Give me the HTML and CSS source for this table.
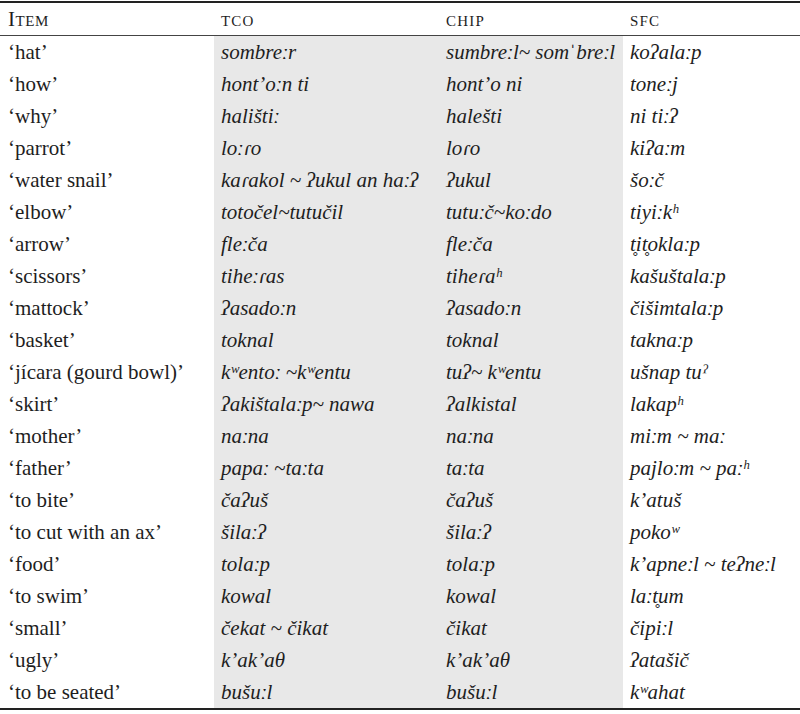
FILE: index.html
```html
<!DOCTYPE html>
<html lang="en">
<head>
<meta charset="utf-8">
<title>Lexical comparison</title>
<link rel="stylesheet" href="styles.css">
</head>
<body>
<table class="lex">
  <colgroup>
    <col class="c-item"><col class="c-tco"><col class="c-chip"><col class="c-sfc">
  </colgroup>
  <thead>
    <tr><th>Item</th><th>tco</th><th>chip</th><th>sfc</th></tr>
  </thead>
  <tbody>
    <tr><td>‘hat’</td><td class="g">sombreːr</td><td class="g">sumbreːl~ somˈbreːl</td><td>koʔalaːp</td></tr>
    <tr><td>‘how’</td><td class="g">hont’oːn ti</td><td class="g">hont’o ni</td><td>toneːj</td></tr>
    <tr><td>‘why’</td><td class="g">halištiː</td><td class="g">halešti</td><td>ni tiːʔ</td></tr>
    <tr><td>‘parrot’</td><td class="g">loːɾo</td><td class="g">loɾo</td><td>kiʔaːm</td></tr>
    <tr><td>‘water snail’</td><td class="g">kaɾakol ~ ʔukul an haːʔ</td><td class="g">ʔukul</td><td>šoːč</td></tr>
    <tr><td>‘elbow’</td><td class="g">totočel~tutučil</td><td class="g">tutuːč~koːdo</td><td>tiyiːkʰ</td></tr>
    <tr><td>‘arrow’</td><td class="g">fleːča</td><td class="g">fleːča</td><td>t̥it̥oklaːp</td></tr>
    <tr><td>‘scissors’</td><td class="g">tiheːɾas</td><td class="g">tiheɾaʰ</td><td>kašuštalaːp</td></tr>
    <tr><td>‘mattock’</td><td class="g">ʔasadoːn</td><td class="g">ʔasadoːn</td><td>čišimtalaːp</td></tr>
    <tr><td>‘basket’</td><td class="g">toknal</td><td class="g">toknal</td><td>taknaːp</td></tr>
    <tr><td>‘jícara (gourd bowl)’</td><td class="g">kʷentoː ~kʷentu</td><td class="g">tuʔ~ kʷentu</td><td>ušnap tuˀ</td></tr>
    <tr><td>‘skirt’</td><td class="g">ʔakištalaːp~ nawa</td><td class="g">ʔalkistal</td><td>lakapʰ</td></tr>
    <tr><td>‘mother’</td><td class="g">naːna</td><td class="g">naːna</td><td>miːm ~ maː</td></tr>
    <tr><td>‘father’</td><td class="g">papaː ~taːta</td><td class="g">taːta</td><td>pajloːm ~ paːʰ</td></tr>
    <tr><td>‘to bite’</td><td class="g">čaʔuš</td><td class="g">čaʔuš</td><td>k’atuš</td></tr>
    <tr><td>‘to cut with an ax’</td><td class="g">šilaːʔ</td><td class="g">šilaːʔ</td><td>pokoʷ</td></tr>
    <tr><td>‘food’</td><td class="g">tolaːp</td><td class="g">tolaːp</td><td>k’apneːl ~ teʔneːl</td></tr>
    <tr><td>‘to swim’</td><td class="g">kowal</td><td class="g">kowal</td><td>laːt̥um</td></tr>
    <tr><td>‘small’</td><td class="g">čekat ~ čikat</td><td class="g">čikat</td><td>čipiːl</td></tr>
    <tr><td>‘ugly’</td><td class="g">k’ak’aθ</td><td class="g">k’ak’aθ</td><td>ʔatašič</td></tr>
    <tr><td>‘to be seated’</td><td class="g">bušuːl</td><td class="g">bušuːl</td><td>kʷahat</td></tr>
  </tbody>
</table>
</body>
</html>
```
FILE: styles.css
```css
html, body {
  margin: 0;
  padding: 0;
  background: #fff;
}
body {
  padding-top: 1px;
  font-family: "Liberation Serif", "DejaVu Serif", serif;
  color: #1e1e1e;
}
.lex {
  width: 800px;
  border-collapse: collapse;
  table-layout: fixed;
  font-size: 21px;
  border-top: 2px solid #222;
  border-bottom: 2px solid #222;
}
.c-item { width: 214px; }
.c-tco { width: 225px; }
.c-chip { width: 184px; }
.c-sfc { width: 177px; }
.lex th {
  font-weight: normal;
  font-variant: small-caps;
  text-align: left;
  height: 32px;
  padding: 0 0 0 7px;
  vertical-align: middle;
  border-bottom: 1px solid #444;
  font-size: 21px;
  line-height: 1;
  letter-spacing: 1.2px;
}
.lex th:first-child {
  padding-left: 8px;
  letter-spacing: 0.6px;
}
.lex td {
  height: 32px;
  padding: 0 0 0 7px;
  vertical-align: middle;
  white-space: nowrap;
  line-height: 1;
}
.lex td:first-child {
  padding-left: 8px;
}
.lex td:not(:first-child) {
  font-style: italic;
}
.lex td.g {
  background: #e8e8e8;
}
```
